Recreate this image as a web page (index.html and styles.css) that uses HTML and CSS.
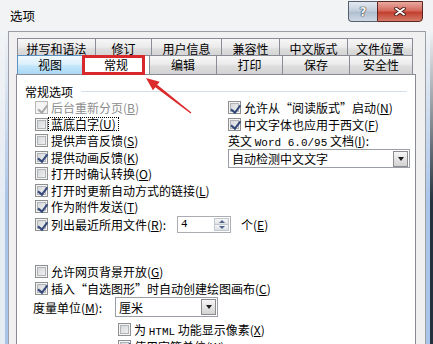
FILE: index.html
```html
<!DOCTYPE html>
<html lang="zh-CN">
<head>
    <meta charset="UTF-8">
    <title>选项</title>
    <link rel="stylesheet" href="styles.css">
</head>
<body>
    <div class="window">
        <div class="titlebar">
            <span class="title">选项</span>
            <div class="caption">
                <span class="cap-btn cap-help">?</span>
                <span class="cap-btn cap-close">
                    <svg width="12" height="9" viewBox="0 0 12 9">
                        <path d="M2 1.5 L10 7.5 M10 1.5 L2 7.5" stroke="#4a1e1a" stroke-width="3.6" stroke-linecap="round"/>
                        <path d="M2 1.5 L10 7.5 M10 1.5 L2 7.5" stroke="#fff" stroke-width="1.8" stroke-linecap="round"/>
                    </svg>
                </span>
            </div>
        </div>

        <div class="frame">
            <div class="edge edge-left"></div>

            <div class="client">
                <div class="tab-row tab-row-back">
                    <span class="tab">拼写和语法</span>
                    <span class="tab">修订</span>
                    <span class="tab">用户信息</span>
                    <span class="tab">兼容性</span>
                    <span class="tab">中文版式</span>
                    <span class="tab">文件位置</span>
                </div>
                <div class="tab-row tab-row-front">
                    <span class="tab hover">视图</span>
                    <span class="tab active">常规</span>
                    <span class="tab">编辑</span>
                    <span class="tab">打印</span>
                    <span class="tab">保存</span>
                    <span class="tab">安全性</span>
                </div>

                <div class="panel">
                    <div class="group-head">
                        <span>常规选项</span>
                        <i class="rule"></i>
                    </div>

                    <div class="general">
                        <div class="col-left">
                            <div class="opt off"><span class="cb on"></span><span>后台重新分页(<u>B</u>)</span></div>
                            <div class="opt"><span class="cb"></span><span class="focus">蓝底白字(<u>U</u>)</span></div>
                            <div class="opt"><span class="cb"></span><span>提供声音反馈(<u>S</u>)</span></div>
                            <div class="opt"><span class="cb on"></span><span>提供动画反馈(<u>K</u>)</span></div>
                            <div class="opt"><span class="cb"></span><span>打开时确认转换(<u>O</u>)</span></div>
                            <div class="opt"><span class="cb on"></span><span>打开时更新自动方式的链接(<u>L</u>)</span></div>
                            <div class="opt"><span class="cb on"></span><span>作为附件发送(<u>T</u>)</span></div>
                        </div>
                        <div class="col-right">
                            <div class="opt"><span class="cb on"></span><span>允许从“阅读版式”启动(<u>N</u>)</span></div>
                            <div class="opt"><span class="cb on"></span><span>中文字体也应用于西文(<u>F</u>)</span></div>
                            <div class="opt"><span>英文 <span class="en">Word 6.0/95</span> 文档(<u>I</u>):</span></div>
                            <div class="combo combo-wide">
                                <span>自动检测中文文字</span>
                                <i class="combo-btn"></i>
                            </div>
                        </div>
                    </div>

                    <div class="lower">
                        <div class="opt recent">
                            <span class="cb on"></span>
                            <span class="recent-label">列出最近所用文件(<u>R</u>):</span>
                            <span class="spin">
                                <span class="spin-val">4</span>
                                <span class="spin-btns"><i class="up"></i><i class="down"></i></span>
                            </span>
                            <span class="unit">个(<u>E</u>)</span>
                        </div>

                        <div class="opt gap-top"><span class="cb"></span><span>允许网页背景开放(<u>G</u>)</span></div>
                        <div class="opt"><span class="cb on"></span><span>插入“自选图形”时自动创建绘图画布(<u>C</u>)</span></div>

                        <div class="measure">
                            <span class="measure-label">度量单位(<u>M</u>):</span>
                            <div class="combo combo-small">
                                <span>厘米</span>
                                <i class="combo-btn"></i>
                            </div>
                        </div>

                        <div class="opt indent html-row"><span class="cb"></span><span>为 <span class="en">HTML</span> 功能显示像素(<u>X</u>)</span></div>
                        <div class="opt indent"><span class="cb on"></span><span>使用字符单位(<u>W</u>)</span></div>
                    </div>
                </div>
            </div>

            <div class="edge edge-right"></div>
        </div>
    </div>

    <!-- annotation drawn over the screenshot -->
    <div class="mark-box"></div>
    <svg class="mark-arrow" width="433" height="344" viewBox="0 0 433 344">
        <polygon points="146,78 159.7,81.7 157.2,84.8 191.4,112.5 190.6,113.5 155.4,87.2 152.9,90.3" fill="#dc2a2c"/>
    </svg>
</body>
</html>
```

FILE: styles.css
```css
* {
    margin: 0;
    padding: 0;
    box-sizing: border-box;
}

body {
    position: relative;
    width: 433px;
    height: 344px;
    overflow: hidden;
    background: #f1f3f5;
    font-family: "Noto Sans CJK SC", sans-serif;
    font-size: 12px;
    color: #000;
}

.window {
    display: flex;
    flex-direction: column;
    height: 100%;
}

/* title bar */
.titlebar {
    height: 31px;
    display: flex;
    justify-content: space-between;
    align-items: flex-start;
}

.title {
    padding: 7px 0 0 10px;
    font-size: 12.5px;
    line-height: 18px;
}

.caption {
    display: flex;
    margin: 1px 10px 0 0;
}

.cap-btn {
    height: 21px;
    display: flex;
    align-items: center;
    justify-content: center;
    border: 1px solid #55606f;
}

.cap-help {
    width: 29px;
    border-right: none;
    border-radius: 0 0 0 4px;
    background: linear-gradient(#e3e9f0, #c3cfdc 45%, #b0bfd0 55%, #cfd9e4);
    color: #f4f4f4;
    font-family: "DejaVu Sans", sans-serif;
    font-weight: bold;
    font-size: 12px;
    text-shadow: 0 0 1px #2d3440, 0 0 1px #2d3440, 0 0 1px #2d3440;
}

.cap-close {
    width: 46px;
    border-color: #5a2723;
    border-radius: 0 0 4px 0;
    background: linear-gradient(#e9aaa0, #d46a5d 45%, #c2402f 55%, #d77a68);
}

/* window frame */
.frame {
    flex: 1;
    display: flex;
    min-height: 0;
}

.edge {
    flex: none;
}

.edge-left {
    width: 8px;
    background: linear-gradient(#f1f3f5, rgba(241, 243, 245, 0) 55%),
                linear-gradient(to right, #e6ecf4 0 5px, #a9c4e8 5px 8px);
}

.edge-right {
    width: 7px;
    background: linear-gradient(#f1f3f5, rgba(241, 243, 245, 0) 55%),
                linear-gradient(to right, #a9c5ea 0 4px, #24313e 4px 7px);
}

.client {
    flex: 1;
    display: flex;
    flex-direction: column;
    min-height: 0;
    padding: 6px 9px 0 7px;
    border: 1px solid #9a9fa6;
    border-bottom: none;
    background: #f0f0f0;
}

/* tabs */
.tab-row {
    display: grid;
    margin-left: 1px;
    width: 396px;
}

.tab-row-back {
    grid-template-columns: 79px 56px 70px 58px 68px 65px;
    height: 17px;
}

.tab-row-front {
    grid-template-columns: 66px 67px 67px 66px 67px 63px;
    height: 19px;
}

.tab {
    border: 1px solid #898c95;
    border-left: none;
    border-bottom: none;
    background: linear-gradient(#f7f7f7, #ebebeb 45%, #dedede 55%, #d2d2d2);
    text-align: center;
    white-space: nowrap;
}

.tab:first-child {
    border-left: 1px solid #898c95;
}

.tab-row-back .tab {
    padding-top: 2px;
    line-height: 16px;
}

.tab-row-front .tab {
    line-height: 18px;
}

.tab.hover {
    border-color: #5b92c2;
    background: linear-gradient(#f1f9fe, #dcf0fc 45%, #c4e6fb 55%, #a9d7f3);
}

.tab.active {
    background: #fff;
}

/* tab page */
.panel {
    flex: 1;
    overflow: hidden;
    padding: 8px 5px 0 8px;
    border: 1px solid #898c95;
    border-bottom: none;
    background: #fff;
}

.group-head {
    display: flex;
    align-items: center;
    height: 16.5px;
}

.rule {
    flex: 1;
    height: 1px;
    margin: 0 3px 0 8px;
    background: #d5dfe5;
}

.general {
    display: flex;
    padding-left: 10px;
}

.col-left {
    width: 193px;
}

.col-right {
    flex: 1;
}

.opt {
    display: flex;
    align-items: center;
    height: 16.5px;
    white-space: nowrap;
}

.opt.off {
    color: #8d8d8d;
}

.en {
    font-family: "Liberation Mono", monospace;
    font-size: 11px;
}

.focus {
    display: inline-block;
    margin-left: -2px;
    padding: 0 2px;
    line-height: 12px;
    outline: 1px dotted #000;
}

/* checkbox */
.cb {
    position: relative;
    flex: none;
    width: 13px;
    height: 13px;
    margin-right: 3px;
    border: 1px solid #8e8f8f;
    background: linear-gradient(135deg, #cdd0d3, #f7f7f7);
    box-shadow: inset 0 0 0 1px #f4f4f4, inset 0 0 0 2px #b0b4b9;
}

.cb.on::after {
    content: "";
    position: absolute;
    left: 3.5px;
    top: 0.5px;
    width: 3.5px;
    height: 7.5px;
    border: solid #34497a;
    border-width: 0 2px 2px 0;
    transform: rotate(38deg);
}

.opt.off .cb {
    border-color: #b8b8b8;
    background: #f4f4f4;
    box-shadow: none;
}

.opt.off .cb::after {
    border-color: #a9a9a9;
}

/* combo box */
.combo {
    display: flex;
    align-items: center;
    height: 19px;
    border: 1px solid #9a9ea6;
    background: #fff;
}

.combo span {
    padding-left: 3px;
    white-space: nowrap;
}

.combo-wide {
    width: 182px;
}

.combo-small {
    width: 103px;
    height: 20px;
}

.combo-btn {
    display: flex;
    align-items: center;
    justify-content: center;
    width: 15px;
    height: 16px;
    margin: 0 1px 0 auto;
    border: 1px solid #8c8c8c;
    background: linear-gradient(#f6f6f6, #d3d3d3);
}

.combo-btn::after {
    content: "";
    border: 3.5px solid transparent;
    border-bottom: 0;
    border-top: 4px solid #1e1e1e;
}

/* lower options */
.lower {
    padding-left: 10px;
}

.opt.recent {
    height: 19px;
}

.recent-label {
    width: 126px;
}

.spin {
    display: flex;
    width: 54px;
    height: 17px;
    border: 1px solid #abadb3;
    background: #fff;
}

.spin-val {
    flex: 1;
    padding-left: 3px;
    font-family: "Liberation Mono", monospace;
    font-size: 11px;
    line-height: 15px;
}

.spin-btns {
    display: flex;
    flex-direction: column;
    width: 15px;
    margin: 1px;
}

.spin-btns i {
    flex: 1;
    display: flex;
    align-items: center;
    justify-content: center;
    border: 1px solid #c3c8d0;
    background: linear-gradient(#f5f6f7, #dde0e4);
}

.spin-btns i + i {
    border-top: none;
}

.spin-btns .up::after {
    content: "";
    border: 3px solid transparent;
    border-top: 0;
    border-bottom: 3px solid #4f6487;
}

.spin-btns .down::after {
    content: "";
    border: 3px solid transparent;
    border-bottom: 0;
    border-top: 3px solid #4f6487;
}

.unit {
    margin-left: 10px;
}

.gap-top {
    margin-top: 29.5px;
}

.measure {
    display: flex;
    align-items: center;
    height: 21px;
    margin-left: -2px;
}

.measure-label {
    width: 82px;
    white-space: nowrap;
}

.indent {
    padding-left: 83px;
}

.html-row {
    margin-top: 4px;
}

/* red annotation */
.mark-box {
    position: absolute;
    left: 82px;
    top: 55px;
    width: 63px;
    height: 20px;
    border: 3px solid #d8282b;
}

.mark-arrow {
    position: absolute;
    left: 0;
    top: 0;
    pointer-events: none;
}
```
